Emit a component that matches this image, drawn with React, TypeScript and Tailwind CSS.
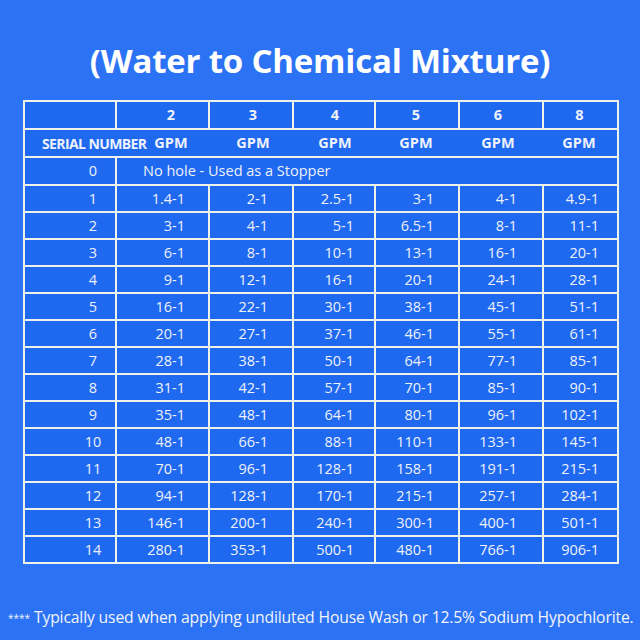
const rows: [number, string[]][] = [
  [1, ["1.4-1", "2-1", "2.5-1", "3-1", "4-1", "4.9-1"]],
  [2, ["3-1", "4-1", "5-1", "6.5-1", "8-1", "11-1"]],
  [3, ["6-1", "8-1", "10-1", "13-1", "16-1", "20-1"]],
  [4, ["9-1", "12-1", "16-1", "20-1", "24-1", "28-1"]],
  [5, ["16-1", "22-1", "30-1", "38-1", "45-1", "51-1"]],
  [6, ["20-1", "27-1", "37-1", "46-1", "55-1", "61-1"]],
  [7, ["28-1", "38-1", "50-1", "64-1", "77-1", "85-1"]],
  [8, ["31-1", "42-1", "57-1", "70-1", "85-1", "90-1"]],
  [9, ["35-1", "48-1", "64-1", "80-1", "96-1", "102-1"]],
  [10, ["48-1", "66-1", "88-1", "110-1", "133-1", "145-1"]],
  [11, ["70-1", "96-1", "128-1", "158-1", "191-1", "215-1"]],
  [12, ["94-1", "128-1", "170-1", "215-1", "257-1", "284-1"]],
  [13, ["146-1", "200-1", "240-1", "300-1", "400-1", "501-1"]],
  [14, ["280-1", "353-1", "500-1", "480-1", "766-1", "906-1"]],
]

const sizes = ["2", "3", "4", "5", "6", "8"]

// right padding per data column so the numbers line up like the sheet
const dataPad = ["pr-[23px]", "pr-[24px]", "pr-[20px]", "pr-[24px]", "pr-[25px]", "pr-[18px]"]
// header text centres drift a little from the cell centres
const headPad = ["pl-[17px]", "pl-[4px]", "pl-[2px]", "pr-[2px]", "pr-[6px]", "pr-[2px]"]

const line = "border-2 border-[#eef0ea]"

export default function App() {
  return (
    <div
      className="w-[640px] h-[640px] bg-[#2c72f5] text-white overflow-hidden"
      style={{ fontFamily: '"Open Sans", "Noto Sans", sans-serif' }}
    >
      <h1 className="pt-[39px] h-[100px] text-center text-[33px] leading-[44px] font-bold tracking-[-0.2px]">
        (Water to Chemical Mixture)
      </h1>

      <table className="ml-[23px] w-[594px] table-fixed border-collapse text-[14.5px] text-[#eef2fa]">
        <colgroup>
          <col className="w-[92px]" />
          <col className="w-[93px]" />
          <col className="w-[84px]" />
          <col className="w-[82px]" />
          <col className="w-[84px]" />
          <col className="w-[84px]" />
          <col className="w-[75px]" />
        </colgroup>
        <tbody className="bg-[#1f68f0]">
          <tr className="h-[28px] font-bold">
            <td className={line}></td>
            {sizes.map((s, i) => (
              <td key={s} className={`${line} text-center ${headPad[i]}`}>{s}</td>
            ))}
          </tr>
          <tr className="h-[28px] font-bold border-x-2 border-[#eef0ea]">
            <td className="pl-[17px] whitespace-nowrap overflow-visible tracking-[-0.6px] text-[14px]">SERIAL NUMBER</td>
            {sizes.map((s, i) => (
              <td key={s} className={`text-center ${headPad[i]}`}>GPM</td>
            ))}
          </tr>
          <tr className="h-[28px]">
            <td className={`${line} text-center pl-[46px]`}>0</td>
            <td colSpan={6} className={`${line} pl-[26px]`}>No hole - Used as a Stopper</td>
          </tr>
          {rows.map(([n, vals]) => (
            <tr key={n} className="h-[27px]">
              <td className={`${line} text-center pl-[46px]`}>{n}</td>
              {vals.map((v, i) => (
                <td key={i} className={`${line} text-right ${dataPad[i]}`}>{v}</td>
              ))}
            </tr>
          ))}
        </tbody>
      </table>

      <p className="mt-[42px] pl-[8px] whitespace-nowrap text-[15.7px] text-[#f2f5fb] tracking-[-0.15px]">
        <span className="text-[10px] align-middle tracking-[0px]">****</span>{" "}
        Typically used when applying undiluted House Wash or 12.5% Sodium Hypochlorite.
      </p>
    </div>
  )
}
